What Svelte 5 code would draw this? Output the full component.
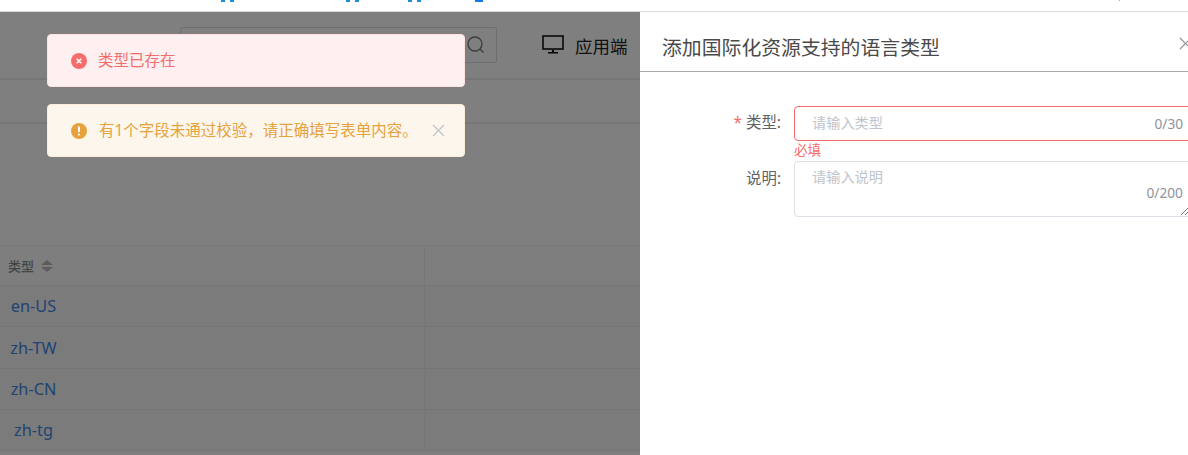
<script>
  const rows = ["en-US", "zh-TW", "zh-CN", "zh-tg"];
</script>

<div class="screen">
  <div class="topbar">
    <i class="tail t1"></i>
    <i class="tail t2"></i>
    <i class="tail t3"></i>
    <i class="tail t4"></i>
    <i class="tick"></i>
  </div>

  <div class="page">
    <div class="head">
      <div class="search">
        <svg width="18" height="18" viewBox="0 0 18 18" fill="none" stroke="#777" stroke-width="1.3">
          <circle cx="8" cy="8" r="7" />
          <path d="M13 13 L16.5 16.5" />
        </svg>
      </div>
      <div class="client">
        <svg width="22" height="19" viewBox="0 0 22 19" fill="none">
          <rect x="1" y="1" width="20" height="13" stroke="#111" stroke-width="1.6" />
          <path d="M10 15h2v2h4v1.5H6V17h4z" fill="#111" />
        </svg>
        <span>应用端</span>
      </div>
    </div>
    <div class="tabs"></div>

    <div class="table">
      <div class="row thead">
        <div class="cell first">
          <span class="th">类型</span>
          <span class="sort"><b class="up"></b><b class="down"></b></span>
        </div>
        <div class="cell"></div>
      </div>
      {#each rows as row}
        <div class="row">
          <div class="cell first"><a href="#top">{row}</a></div>
          <div class="cell"></div>
        </div>
      {/each}
    </div>
  </div>

  <div class="mask"></div>

  <div class="messages">
    <div class="msg error">
      <svg width="16" height="16" viewBox="0 0 16 16">
        <circle cx="8" cy="8" r="8" fill="#f56c6c" />
        <path d="M5.7 5.7l4.6 4.6M10.3 5.7l-4.6 4.6" stroke="#fff" stroke-width="1.5" />
      </svg>
      <span>类型已存在</span>
    </div>
    <div class="msg warning">
      <svg width="16" height="16" viewBox="0 0 16 16">
        <circle cx="8" cy="8" r="8" fill="#e6a23c" />
        <path d="M8 3.5v5.6" stroke="#fff" stroke-width="2" />
        <circle cx="8" cy="11.6" r="1.1" fill="#fff" />
      </svg>
      <span>有1个字段未通过校验，请正确填写表单内容。</span>
      <svg class="close" width="13" height="13" viewBox="0 0 13 13" stroke="#c0c4cc" stroke-width="1.3">
        <path d="M1 1l11 11M12 1L1 12" />
      </svg>
    </div>
  </div>

  <aside class="drawer">
    <header>
      <h2>添加国际化资源支持的语言类型</h2>
      <svg class="x" width="13" height="13" viewBox="0 0 13 13" stroke="#909399" stroke-width="1.2">
        <path d="M1 1l11 11M12 1L1 12" />
      </svg>
    </header>
    <form>
      <div class="field">
        <label for="kind"><em>*</em> 类型:</label>
        <div class="control">
          <div class="box invalid">
            <input id="kind" placeholder="请输入类型" />
            <span class="count">0/30</span>
          </div>
          <div class="err">必填</div>
        </div>
      </div>
      <div class="field">
        <label for="desc">说明:</label>
        <div class="control">
          <div class="box area">
            <textarea id="desc" placeholder="请输入说明"></textarea>
            <span class="count">0/200</span>
            <svg class="grip" width="8" height="8" viewBox="0 0 8 8" stroke="#555" stroke-width="0.8" fill="none">
              <path d="M0 8L8 0M4 8L8 4" />
            </svg>
          </div>
        </div>
      </div>
    </form>
  </aside>
</div>

<style>
  :global(body) {
    margin: 0;
    overflow: hidden;
  }
  .screen {
    position: relative;
    width: 1188px;
    height: 455px;
    overflow: hidden;
    background: #fff;
    font-family: "Noto Sans", "Noto Sans CJK SC", sans-serif;
    font-size: 14px;
    color: #606266;
  }
  .topbar {
    position: relative;
    height: 11px;
    border-bottom: 1px solid #dcdcdc;
    box-sizing: content-box;
  }
  .tail {
    position: absolute;
    top: 0;
    height: 2px;
    width: 13px;
    border-left: 4px solid #1a8fd6;
    border-right: 4px solid #1a8fd6;
    box-sizing: border-box;
  }
  .t1 { left: 221px; }
  .t2 { left: 346px; }
  .t3 { left: 408px; }
  .t4 {
    left: 475px;
    width: 8px;
    border: 0;
    background: #1478e6;
  }
  .tick {
    position: absolute;
    top: 0;
    left: 1119px;
    width: 1px;
    height: 1px;
    background: #aaa;
  }
  .page {
    background: #fff;
    height: 443px;
  }
  .head {
    display: flex;
    align-items: center;
    height: 68px;
    padding-left: 180px;
    border-bottom: 2px solid #eee;
    box-sizing: border-box;
  }
  .search {
    width: 317px;
    height: 36px;
    margin-top: -1px;
    border: 1px solid #dcdfe6;
    border-radius: 2px;
    box-sizing: border-box;
    display: flex;
    align-items: center;
    justify-content: flex-end;
    padding-right: 11px;
  }
  .client {
    display: flex;
    align-items: center;
    gap: 11px;
    margin-left: 45px;
    font-size: 17.5px;
    color: #222;
  }
  .client svg {
    margin-top: -1px;
  }
  .tabs {
    height: 44px;
    border-bottom: 2px solid #eee;
    box-sizing: border-box;
  }
  .table {
    margin-top: 121px;
  }
  .row {
    display: grid;
    grid-template-columns: 425px 1fr;
    height: 41px;
    border-bottom: 1px solid #e8e8e8;
    box-sizing: border-box;
    background: #f6f6f6;
  }
  .row:nth-child(3) {
    height: 42px;
  }
  .thead {
    border-top: 1px solid #f0f0f0;
    height: 41px;
    background: #fdfdfd;
  }
  .cell.first {
    border-right: 1px solid #eee;
    box-sizing: border-box;
    display: flex;
    align-items: center;
  }
  .cell a {
    width: 67px;
    text-align: center;
    color: #3f87e6;
    text-decoration: none;
    font-size: 16.3px;
  }
  .th {
    margin-left: 8px;
    font-size: 13px;
    font-weight: 500;
    color: #888;
  }
  .sort {
    display: flex;
    flex-direction: column;
    gap: 2px;
    margin-left: 7px;
  }
  .sort b {
    display: block;
    border-left: 6px solid transparent;
    border-right: 6px solid transparent;
  }
  .up { border-bottom: 5px solid #bbb; }
  .down { border-top: 5px solid #bbb; }
  .mask {
    position: absolute;
    inset: 12px 0 0 0;
    background: rgba(0, 0, 0, 0.5);
  }
  .messages {
    position: absolute;
    top: 34px;
    left: 47px;
    width: 418px;
    display: flex;
    flex-direction: column;
    gap: 17px;
  }
  .msg {
    height: 53px;
    display: flex;
    align-items: center;
    gap: 11px;
    padding: 0 0 0 23px;
    border: 1px solid;
    border-radius: 4px;
    box-sizing: border-box;
    font-size: 15.5px;
  }
  .msg span {
    flex: 1;
    margin-top: -2px;
  }
  .error {
    background: #fef0f0;
    border-color: #fde2e2;
    color: #f56c6c;
  }
  .warning {
    background: #fdf6ec;
    border-color: #faecd8;
    color: #e6a23c;
    gap: 12px;
  }
  .close {
    margin-right: 19px;
  }
  .drawer {
    position: absolute;
    top: 12px;
    left: 640px;
    right: 0;
    bottom: 0;
    background: #fff;
    overflow: hidden;
  }
  header {
    height: 60px;
    border-bottom: 1px solid #aaa;
    box-sizing: border-box;
    display: flex;
    align-items: center;
    padding: 9px 0 0 22px;
    position: relative;
  }
  h2 {
    margin: 0;
    font-size: 19.85px;
    font-weight: 400;
    color: #4a4a4a;
  }
  .x {
    position: absolute;
    left: 539px;
    top: 25px;
  }
  form {
    padding-top: 34px;
    display: flex;
    flex-direction: column;
  }
  .field {
    display: flex;
  }
  label {
    width: 141px;
    text-align: right;
    padding-top: 7px;
    line-height: 20px;
    font-size: 15.4px;
    color: #606266;
    flex: none;
  }
  .field + .field label {
    padding-top: 8px;
  }
  label em {
    color: #f56c6c;
    font-style: normal;
  }
  .control {
    margin-left: 13px;
    width: 560px;
    flex: none;
  }
  .box {
    position: relative;
    height: 35px;
    border: 1px solid #dcdfe6;
    border-radius: 4px;
    box-sizing: border-box;
  }
  .invalid {
    border-color: #f56c6c;
  }
  .area {
    height: 56px;
  }
  input,
  textarea {
    display: block;
    width: 100%;
    height: 100%;
    border: 0;
    outline: 0;
    resize: none;
    background: none;
    padding: 0 0 2px 17px;
    box-sizing: border-box;
    font: inherit;
    font-size: 14.2px;
    color: #606266;
  }
  textarea {
    padding-top: 4px;
  }
  input::placeholder,
  textarea::placeholder {
    color: #c0c4cc;
    opacity: 1;
  }
  .count {
    position: absolute;
    top: 7px;
    left: 359.5px;
    font-size: 13.7px;
    line-height: 20px;
    color: #909399;
  }
  .area .count {
    top: 21px;
    left: 351.5px;
  }
  .grip {
    position: absolute;
    left: 386px;
    bottom: 1px;
  }
  .err {
    height: 20px;
    font-size: 13.5px;
    line-height: 18px;
    color: #f56c6c;
  }
</style>
